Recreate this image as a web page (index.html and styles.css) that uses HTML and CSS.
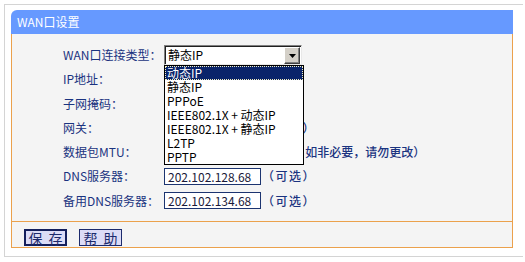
FILE: index.html
```html
<!DOCTYPE html>
<html lang="zh-CN">
<head>
<meta charset="utf-8">
<title>WAN口设置</title>
<link rel="stylesheet" href="styles.css">
</head>
<body>
<div class="frame">
  <div class="panel">
    <div class="title">WAN口设置</div>
    <div class="body">
      <div class="form">
        <div class="label">WAN口连接类型：</div>
        <div class="field">
          <div class="select">
            <span class="sel-text">静态IP</span>
            <span class="sel-btn"><svg width="7" height="4" viewBox="0 0 7 4"><path d="M0 0H7L3.5 4Z" fill="#000"/></svg></span>
            <ul class="options">
              <li class="selected">动态IP</li>
              <li>静态IP</li>
              <li>PPPoE</li>
              <li>IEEE802.1X + 动态IP</li>
              <li>IEEE802.1X + 静态IP</li>
              <li>L2TP</li>
              <li>PPTP</li>
            </ul>
          </div>
        </div>

        <div class="label">IP地址：</div>
        <div class="field"><input class="input" type="text" value=""></div>

        <div class="label">子网掩码：</div>
        <div class="field"><input class="input" type="text" value=""></div>

        <div class="label">网关：</div>
        <div class="field"><input class="input" type="text" value=""><span class="hint">（可选）</span></div>

        <div class="label">数据包MTU：</div>
        <div class="field"><input class="input short" type="text" value=""><span class="hint mtu">（默认是1500，如非必要，请勿更改）</span></div>

        <div class="label">DNS服务器：</div>
        <div class="field"><input class="input" type="text" value="202.102.128.68"><span class="hint">（可选）</span></div>

        <div class="label">备用DNS服务器：</div>
        <div class="field"><input class="input" type="text" value="202.102.134.68"><span class="hint">（可选）</span></div>
      </div>
      <div class="actions">
        <button class="btn default" type="button">保 存</button>
        <button class="btn" type="button">帮 助</button>
      </div>
    </div>
  </div>
</div>
</body>
</html>
```

FILE: styles.css
```css
* { box-sizing: border-box; }

html, body {
  margin: 0;
  padding: 0;
  background: #ffffff;
}

body {
  font-family: "Noto Sans CJK SC", "DejaVu Sans", sans-serif;
  font-size: 12px;
  color: #1a3380;
}

.frame {
  width: 519px;
  height: 253px;
  margin: 4px 0 0 4px;
  border-top: 1px solid #d4d4d4;
  border-left: 1px solid #d4d4d4;
  border-bottom: 1px solid #d4d4d4;
  padding: 5px 0 0 6px;
}

.panel {
  width: 502px;
}

.title {
  height: 24px;
  background: #6699ff;
  border-top-left-radius: 6px;
  color: #ffffff;
  line-height: 23px;
  padding-left: 6px;
  font-size: 12px;
}

.body {
  background: #f4f4f4;
  border: 1px solid #eba14c;
  border-top: none;
}

.form {
  display: grid;
  grid-template-columns: 101px 1fr;
  grid-auto-rows: 24.25px;
  align-items: center;
  padding: 9px 0 9px 51px;
  height: 188px;
  border-bottom: 1px solid #eba14c;
}

.label {
  white-space: nowrap;
  line-height: 16px;
}

.field {
  display: flex;
  align-items: center;
  white-space: nowrap;
}

.input {
  width: 97px;
  height: 17px;
  border: 1px solid #1c3470;
  background: #ffffff;
  font-family: "Noto Sans CJK SC", "DejaVu Sans", sans-serif;
  font-size: 12px;
  color: #1a1a3a;
  padding: 0 3px;
  margin: 0;
  line-height: 15px;
  outline: none;
}

.input.short {
  width: 52px;
}

.hint {
  margin-left: 1px;
  line-height: 16px;
  font-weight: 500;
  letter-spacing: 1.5px;
}

.hint.mtu {
  margin-left: 2px;
  letter-spacing: 0;
}

.select {
  position: relative;
  width: 138px;
  height: 20px;
  background: #ffffff;
  border: 1px solid;
  border-color: #808080 #e8e8e8 #e8e8e8 #808080;
  box-shadow: inset 1px 1px 0 #202020;
  display: flex;
  align-items: center;
  color: #000000;
}

.sel-text {
  flex: 1;
  padding-left: 3px;
  line-height: 16px;
}

.sel-btn {
  width: 16px;
  height: 17px;
  margin-right: 1px;
  margin-top: 1px;
  background: #d4d0c8;
  border: 1px solid;
  border-color: #ffffff #404040 #404040 #ffffff;
  box-shadow: inset -1px -1px 0 #808080;
  display: flex;
  align-items: center;
  justify-content: center;
}

.options {
  position: absolute;
  left: -1px;
  top: 19px;
  width: 140px;
  margin: 0;
  padding: 0;
  list-style: none;
  background: #ffffff;
  border: 1px solid #000000;
  z-index: 5;
}

.options li {
  height: 14px;
  line-height: 14px;
  padding-left: 2px;
  color: #000000;
  white-space: nowrap;
}

.options li.selected {
  background: #0a246a;
  color: #ffffff;
  outline: 1px dotted #f4f0c0;
  outline-offset: -1px;
}

.actions {
  height: 25px;
  padding: 7px 0 0 12px;
  display: flex;
  gap: 12px;
  align-items: flex-start;
}

.btn {
  height: 17px;
  padding: 0;
  width: 43px;
  background: #dcdcf6;
  border: 1px solid #1c2a6c;
  color: #1c2a6c;
  font-family: "Noto Sans CJK SC", "DejaVu Sans", sans-serif;
  font-size: 14px;
  line-height: 14px;
  word-spacing: 3px;
  white-space: pre;
  text-align: center;
}

.btn.default {
  border: 2px solid #141f5c;
}
```
